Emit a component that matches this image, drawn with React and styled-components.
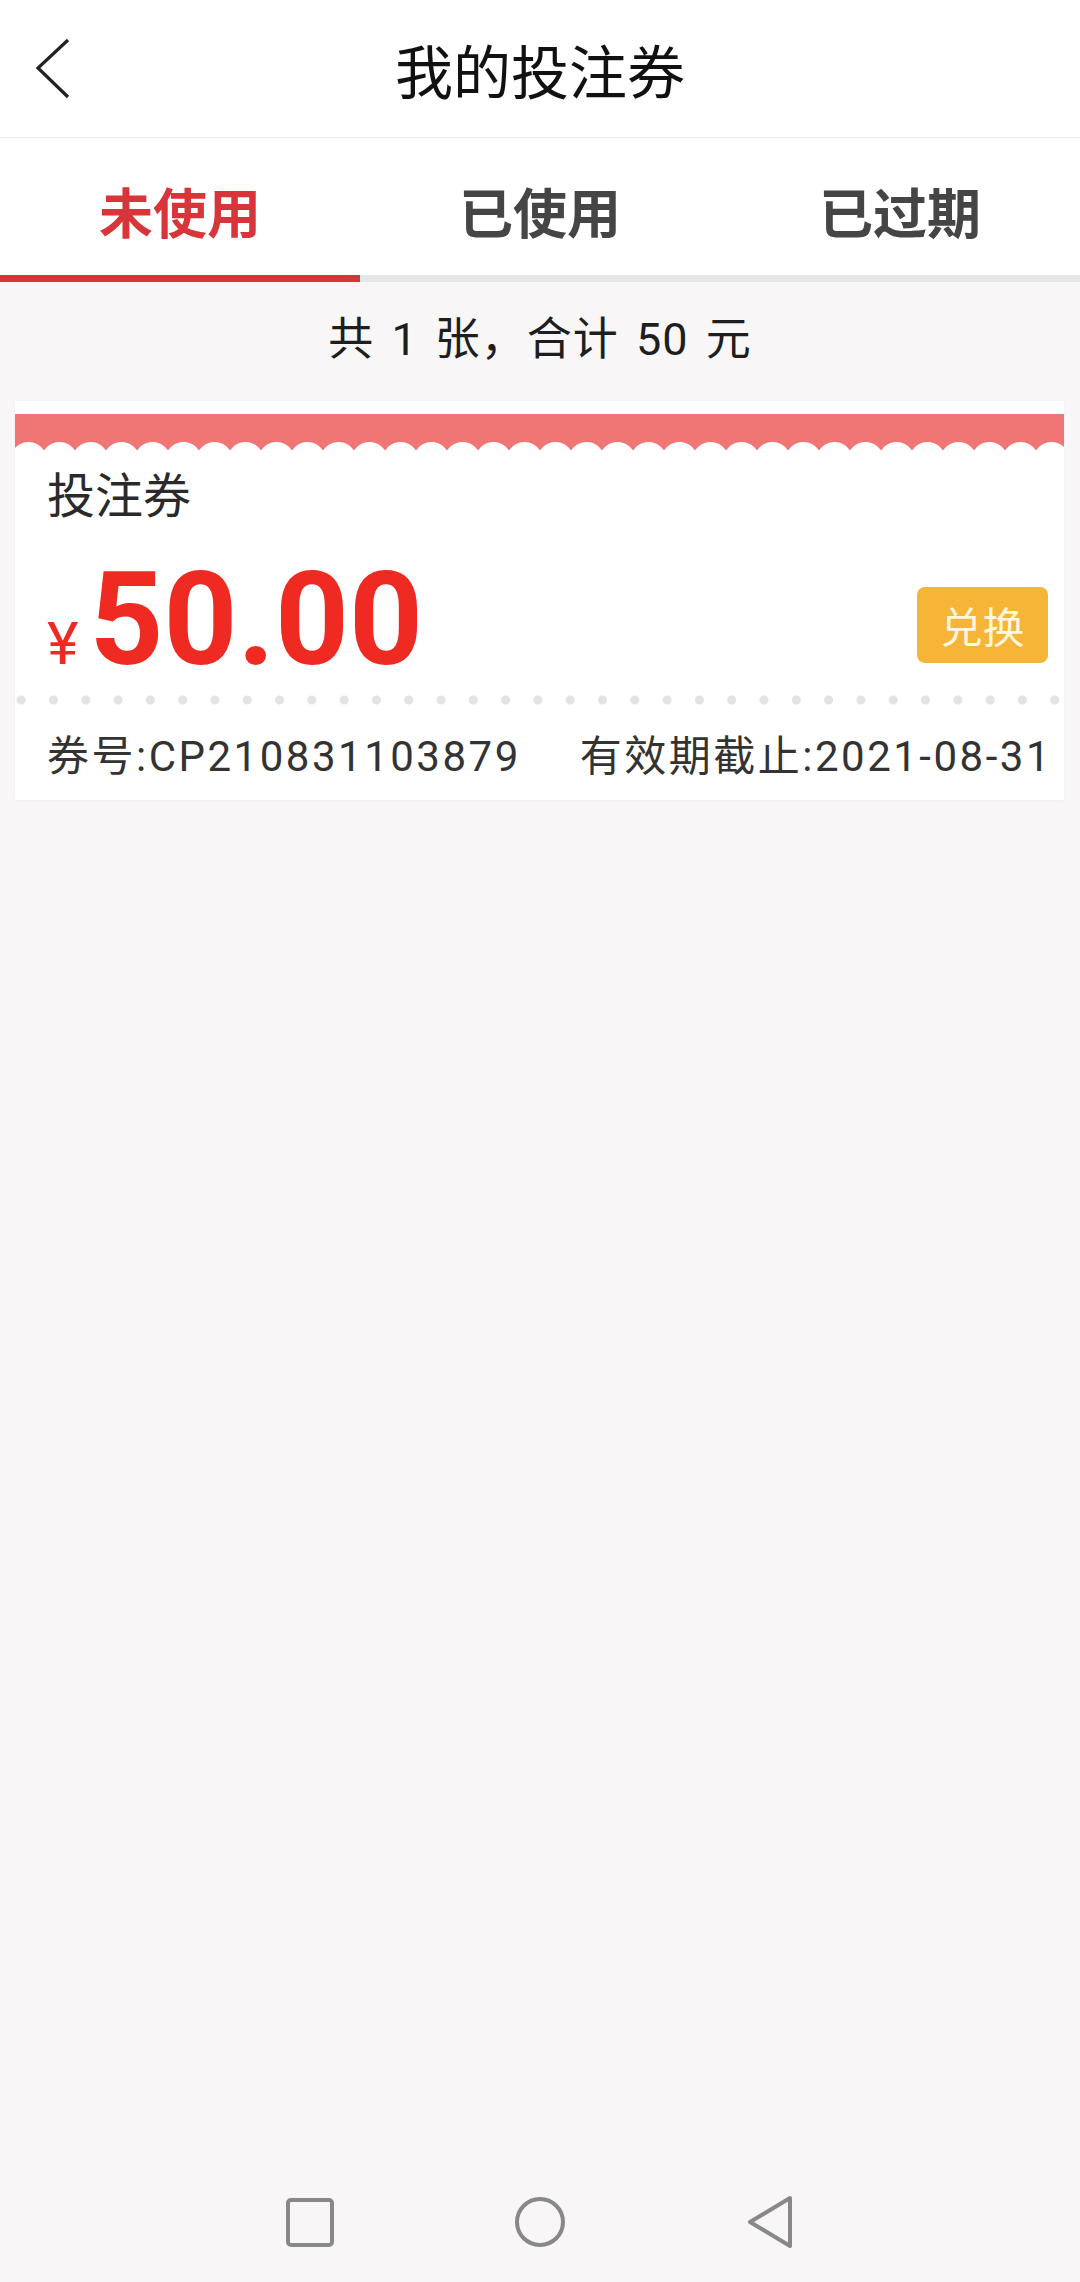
import React, { useState } from 'react'
import styled, { createGlobalStyle } from 'styled-components'

const GlobalStyle = createGlobalStyle`
    html, body {
        margin: 0;
        padding: 0;
    }
    body {
        background: #f8f6f7;
        font-family: Roboto, "Noto Sans CJK SC", sans-serif;
    }
`

const Page = styled.div`
    min-height: 100vh;
    display: flex;
    flex-direction: column;
`

const Header = styled.header`
    height: 137px;
    background: #fff;
    border-bottom: 1px solid #efefef;
    display: grid;
    grid-template-columns: 1fr auto 1fr;
    align-items: center;
`

const BackButton = styled.button`
    justify-self: start;
    margin-left: 34px;
    padding: 0;
    border: none;
    background: none;
    display: flex;
    align-items: center;
`

const Title = styled.h1`
    margin: 0;
    font-size: 58px;
    font-weight: 400;
    color: #111;
`

const TabBar = styled.nav`
    display: flex;
    background: #fff;
`

const Tab = styled.button`
    flex: 1;
    height: 144px;
    box-sizing: border-box;
    padding: 7px 0 0;
    border: none;
    border-bottom: 7px solid ${p => (p.$active ? '#d8353a' : '#e6e6e6')};
    background: #fff;
    font-family: inherit;
    font-size: 54px;
    font-weight: 700;
    color: ${p => (p.$active ? '#d8353a' : '#454545')};
`

const Summary = styled.div`
    height: 114px;
    box-sizing: border-box;
    padding-bottom: 8px;
    display: flex;
    align-items: center;
    justify-content: center;
    font-size: 45px;
    word-spacing: 5px;
    letter-spacing: 1px;
    color: #1e1e1e;
`

const Card = styled.section`
    margin: 5px 16px 0 15px;
    padding: 13px 0;
    background: #fff;
    box-shadow: 0 1px 3px rgba(0, 0, 0, 0.03);
`

const RedBand = styled.div`
    height: 36px;
    background-color: #f07676;
    background-image: radial-gradient(circle at 50% 26px, #fff 17.5px, transparent 18.5px);
    background-size: 31px 16px;
    background-position: -2px 100%;
    background-repeat: repeat-x;
`

const Label = styled.div`
    padding: 17px 32px 0;
    font-size: 48px;
    line-height: 60px;
    color: #2a2a2a;
`

const AmountRow = styled.div`
    margin-top: 28px;
    padding: 0 16px 0 32px;
    display: flex;
    align-items: center;
    justify-content: space-between;
`

const Amount = styled.div`
    display: flex;
    align-items: baseline;
    color: #ef2a22;
`

const Yen = styled.span`
    font-size: 60px;
    margin-right: 11px;
`

const Value = styled.span`
    font-size: 129px;
    font-weight: 700;
    line-height: 1;
`

const ExchangeButton = styled.button`
    width: 131px;
    height: 76px;
    margin-top: 10px;
    border: none;
    border-radius: 8px;
    background: #f6b536;
    color: #fff7de;
    font-family: inherit;
    font-size: 42px;
    padding: 0;
`

const Perforation = styled.div`
    height: 10px;
    margin-top: 11px;
    background-image: radial-gradient(circle, #e3e3e3 4px, transparent 5px);
    background-size: 32.3px 10px;
    background-position: -10px 0;
    background-repeat: repeat-x;
`

const Meta = styled.div`
    margin-top: 22px;
    padding: 0 12px 0 32px;
    display: flex;
    justify-content: space-between;
    font-size: 42px;
    letter-spacing: 2.5px;
    line-height: 60px;
    color: #333;
`

const SystemBar = styled.footer`
    margin-top: auto;
    height: 120px;
    display: flex;
    justify-content: center;
    align-items: center;
    gap: 170px;
`

const NavKey = styled.div`
    width: 60px;
    display: flex;
    justify-content: center;
`

const tabs = ['未使用', '已使用', '已过期']

export default function App() {
    const [active, setActive] = useState(0)

    return (
        <Page>
            <GlobalStyle />
            <Header>
                <BackButton aria-label="back">
                    <svg width="36" height="62" viewBox="0 0 36 62">
                        <polyline points="34,2 4,30 34,59" fill="none" stroke="#222" strokeWidth="3.2" />
                    </svg>
                </BackButton>
                <Title>我的投注券</Title>
                <div />
            </Header>

            <TabBar>
                {tabs.map((t, i) => (
                    <Tab key={t} $active={i === active} onClick={() => setActive(i)}>
                        {t}
                    </Tab>
                ))}
            </TabBar>

            <Summary>共 1 张，合计 50 元</Summary>

            <Card>
                <RedBand />
                <Label>投注券</Label>
                <AmountRow>
                    <Amount>
                        <Yen>¥</Yen>
                        <Value>50.00</Value>
                    </Amount>
                    <ExchangeButton>兑换</ExchangeButton>
                </AmountRow>
                <Perforation />
                <Meta>
                    <span>券号:CP210831103879</span>
                    <span>有效期截止:2021-08-31</span>
                </Meta>
            </Card>

            <SystemBar>
                <NavKey>
                    <svg width="48" height="49" viewBox="0 0 48 49">
                        <rect x="2" y="2" width="44" height="45" rx="3" fill="none" stroke="#888" strokeWidth="4" />
                    </svg>
                </NavKey>
                <NavKey>
                    <svg width="52" height="52" viewBox="0 0 52 52">
                        <circle cx="26" cy="26" r="23" fill="none" stroke="#888" strokeWidth="4" />
                    </svg>
                </NavKey>
                <NavKey>
                    <svg width="48" height="54" viewBox="0 0 48 54">
                        <path d="M44 3 L4 27 L44 51 Z" fill="none" stroke="#888" strokeWidth="4" strokeLinejoin="round" />
                    </svg>
                </NavKey>
            </SystemBar>
        </Page>
    )
}
